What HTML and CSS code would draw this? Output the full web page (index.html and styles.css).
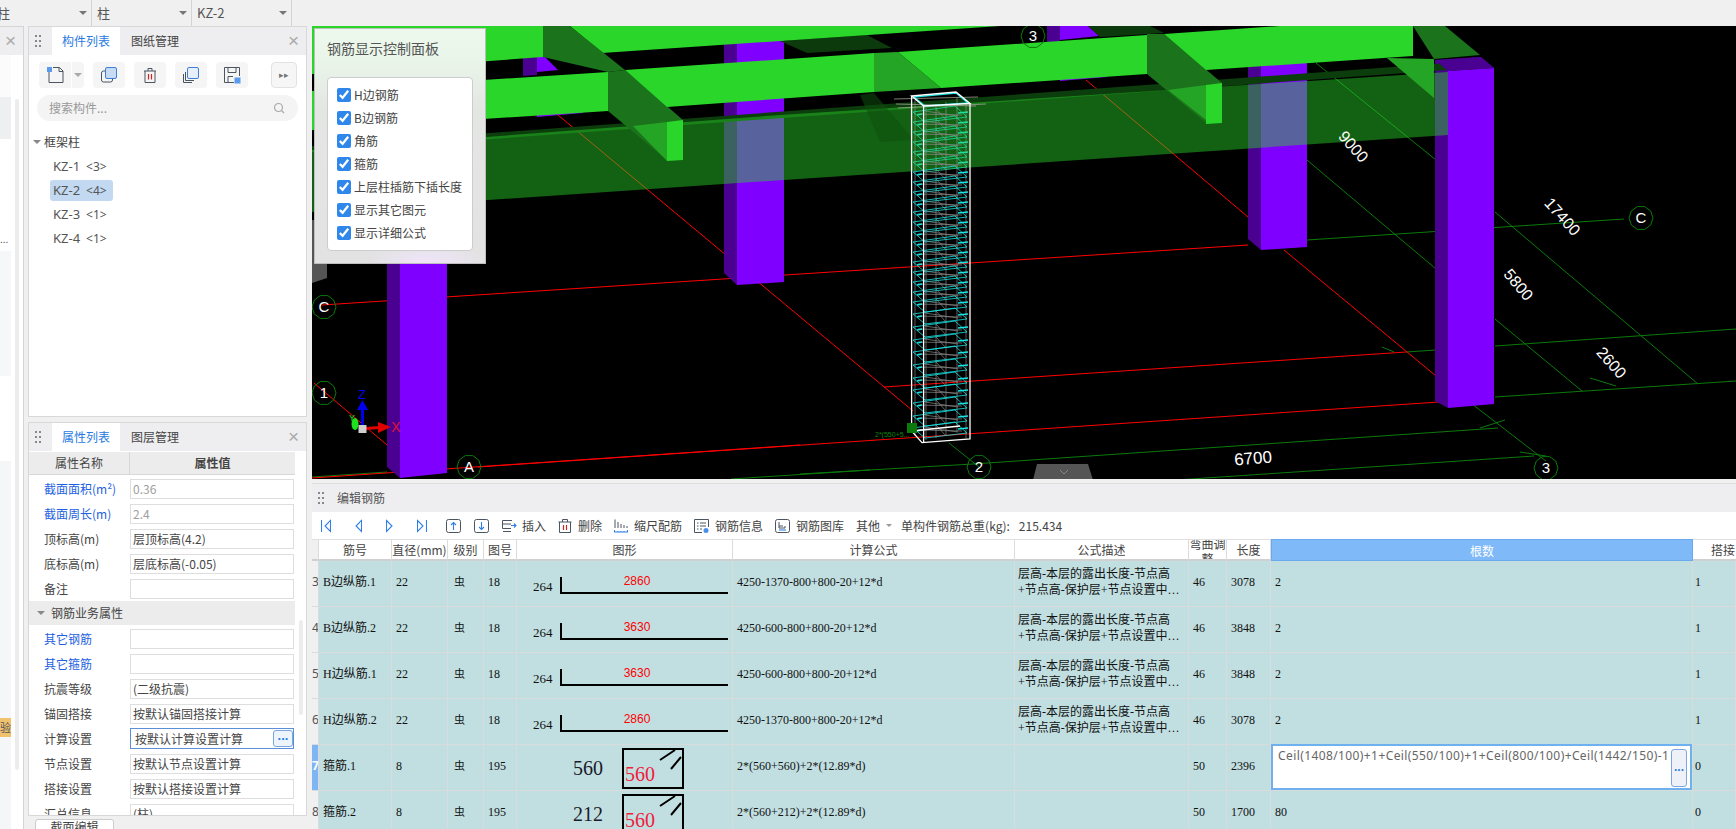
FILE: index.html
```html
<!DOCTYPE html>
<html lang="zh">
<head>
<meta charset="utf-8">
<title>编辑钢筋</title>
<link rel="stylesheet" href="styles.css">
</head>
<body>
<svg class="sprite" width="0" height="0" aria-hidden="true">
  <defs>
    <g id="dots"><rect x="0" y="0" width="2" height="2"/><rect x="4" y="0" width="2" height="2"/><rect x="0" y="5" width="2" height="2"/><rect x="4" y="5" width="2" height="2"/><rect x="0" y="10" width="2" height="2"/><rect x="4" y="10" width="2" height="2"/></g>
    <polygon id="oct" points="12,0 9.7,7 3.7,11.4 -3.7,11.4 -9.7,7 -12,0 -9.7,-7 -3.7,-11.4 3.7,-11.4 9.7,-7"/>
    <g id="st">
      <polygon class="st-q" points="913,0 955,-6 967,5 925,10"/>
      <path class="st-g" d="M918 2L962 3M936 -3L946 8M925 -1L958 4"/>
      <path class="st-t" d="M958 1L968 0M917 3L922 2"/>
    </g>
  </defs>
</svg>
<div class="app">
  <header class="topbar">
    <div class="drop drop-first"><span>柱</span><i class="caret"></i></div>
    <div class="drop"><span>柱</span><i class="caret"></i></div>
    <div class="drop"><span>KZ-2</span><i class="caret"></i></div>
  </header>
  <div class="main">
    <aside class="strip">
      <div class="strip-head"><span class="close">×</span></div>
      <div class="strip-body">
        <div class="strip-list">
          <div class="sl sl-a"></div>
          <div class="sl sl-b"></div>
          <div class="sl sl-c">...</div>
          <div class="sl sl-d"></div>
          <div class="sl sl-e"></div>
          <div class="sl sl-f"><div class="badge">验</div></div>
        </div>
        <div class="strip-scroll"></div>
      </div>
    </aside>

    <div class="sidecol">
      <section class="panel panel-list">
        <div class="p-head">
          <svg class="dots" width="6" height="12"><use href="#dots"/></svg>
          <span class="tab active">构件列表</span><span class="tab">图纸管理</span>
          <span class="close">×</span>
        </div>
        <div class="p-tools">
          <button class="ibtn ibtn-main"><svg width="18" height="18" viewBox="0 0 18 18"><path class="ic-k" d="M3 5V16.5H17V5L13.500 1.500H7"/><path class="ic-k" d="M13 1.500V5.500H17"/><rect class="ic-blue" x="1" y="1" width="5" height="5"/></svg></button>
          <button class="ibtn ibtn-caret"><i class="caret"></i></button>
          <button class="ibtn"><svg width="18" height="18" viewBox="0 0 18 18"><rect class="ic-k" x="1.500" y="5" width="11" height="11" rx="2"/><rect class="ic-f" x="5.500" y="1.500" width="11" height="11" rx="1.500"/></svg></button>
          <button class="ibtn"><svg width="18" height="18" viewBox="0 0 18 18"><path class="ic-k" d="M3 5H15M7 5V2.500H11V5M4 5V16.500H14V5"/><path class="ic-r" d="M7.500 8V13.500M10.500 8V13.500"/></svg></button>
          <button class="ibtn"><svg width="18" height="18" viewBox="0 0 18 18"><path class="ic-k" d="M1.500 8V16.500H10M3.500 6V14.500H12"/><rect class="ic-l" x="5.500" y="1.500" width="11" height="11" rx="1.500"/></svg></button>
          <button class="ibtn"><svg width="18" height="18" viewBox="0 0 18 18"><path class="ic-k" d="M11 16.500H1.500V1.500H16.500V10M5 1.500V6.500H13V1.500M5 16.500V10.500H10"/><rect class="ic-blue" x="11.500" y="11.500" width="6" height="6"/></svg></button>
          <button class="ibtn ibtn-more"><span>▸▸</span></button>
        </div>
        <div class="search"><span>搜索构件...</span><svg width="12" height="12" viewBox="0 0 12 12"><circle class="ic-gr" cx="5.500" cy="5.500" r="4"/><path class="ic-gr" d="M8.500 8.500L11 11"/></svg></div>
        <ul class="tree">
          <li class="t-root"><i class="caret"></i>框架柱</li>
          <li class="t-item"><span class="t-lab">KZ-1<small>&lt;3&gt;</small></span></li>
          <li class="t-item"><span class="t-lab sel">KZ-2<small>&lt;4&gt;</small></span></li>
          <li class="t-item"><span class="t-lab">KZ-3<small>&lt;1&gt;</small></span></li>
          <li class="t-item"><span class="t-lab">KZ-4<small>&lt;1&gt;</small></span></li>
        </ul>
      </section>

      <section class="panel panel-props">
        <div class="p-head">
          <svg class="dots" width="6" height="12"><use href="#dots"/></svg>
          <span class="tab active">属性列表</span><span class="tab">图层管理</span>
          <span class="close">×</span>
        </div>
        <div class="props-scroll"></div>
        <div class="prop-head"><div class="ph-n">属性名称</div><div class="ph-v">属性值</div></div>
        <div class="props">
          <div class="prow"><label class="blue">截面面积(m²)</label><div class="val dis">0.36</div></div>
          <div class="prow"><label class="blue">截面周长(m)</label><div class="val dis">2.4</div></div>
          <div class="prow"><label>顶标高(m)</label><div class="val">层顶标高(4.2)</div></div>
          <div class="prow"><label>底标高(m)</label><div class="val">层底标高(-0.05)</div></div>
          <div class="prow"><label>备注</label><div class="val"></div></div>
          <div class="psec"><i class="caret"></i>钢筋业务属性</div>
          <div class="prow"><label class="blue">其它钢筋</label><div class="val"></div></div>
          <div class="prow"><label class="blue">其它箍筋</label><div class="val"></div></div>
          <div class="prow"><label>抗震等级</label><div class="val">(二级抗震)</div></div>
          <div class="prow"><label>锚固搭接</label><div class="val">按默认锚固搭接计算</div></div>
          <div class="prow"><label>计算设置</label><div class="val active">按默认计算设置计算<span class="dotbtn">...</span></div></div>
          <div class="prow"><label>节点设置</label><div class="val">按默认节点设置计算</div></div>
          <div class="prow"><label>搭接设置</label><div class="val">按默认搭接设置计算</div></div>
          <div class="prow"><label>汇总信息</label><div class="val">(柱)</div></div>
        </div>
      </section>
      <button class="sect-btn">截面编辑</button>
    </div>

    <div class="work">
      <div class="viewport">
        <svg class="scene" width="1424" height="453" viewBox="312 26 1424 453">
          <rect x="312" y="26" width="1424" height="453" fill="#000"/>
          <g class="ln-g">
            <path d="M312 477L387 472M731 479L870 470M800 474L973 464M973 464L1498 428M1176 480L1534 456"/>
            <path d="M1307 240L1624 219M1495 346L1736 329M1406 352L1436 350M1495 397L1736 381"/>
            <path d="M1316 63L1436 160L1436 269M1307 160L1436 269M1495 319L1582 391M1495 212L1698 384M1472 404L1546 461M949 443L979 467"/>
            <path d="M1480 428L1505 420M1590 378L1616 386M1546 456L1520 452M1382 347L1394 352"/>
          </g>
          <g class="ln-r">
            <path d="M322 305L1248 245M884 387L1406 352M478 467L1439 402M800 445L312 478"/>
            <path d="M558 115L913 411M1086 80L1248 217M1284 250L1436 376M314 383L387 445"/>
          </g>
          <g class="col-s"><polygon points="387,150 400,150 400,478 387,467"/><polygon points="724,42 737,42 737,285 724,273"/><polygon points="1248,60 1261,60 1261,250 1248,239"/><polygon points="1435,60 1481,57 1494,68 1448,71 1448,408 1435,401"/><polygon points="1047,26 1060,26 1060,60 1047,60"/><polygon points="523,58 537,57 537,75 523,76"/></g>
          <g class="col-f"><polygon points="400,150 447,150 447,473 400,478"/><polygon points="737,42 784,40 784,282 737,285"/><polygon points="1261,60 1307,60 1307,247 1261,250"/><polygon points="1448,71 1494,68 1494,404 1448,408"/><polygon points="1060,26 1088,26 1099,36 1060,40"/><polygon points="1060,78 1107,75 1107,77 1060,81"/><polygon points="537,57 545,57 558,70 537,72"/><polygon points="536,113 583,110 583,113 537,117"/></g>
          <polygon class="shade" points="312,152 1448,70 1448,63 312,146"/>
          <polygon class="band" points="312,150 780,115 1448,72 1448,135 312,212"/>
          <polygon class="dk" points="780,41 867,35 892,48 807,53"/>
          <polygon class="dk" points="1088,26 1150,26 1164,33 1100,37"/>
          <polygon class="tr" points="860,95 874,93 914,140 880,142"/>
          <polygon class="br" points="312,26 543,26 543,57 312,74"/>
          <polygon class="br" points="570,26 1000,26 602,53"/>
          <polygon class="sd" points="543,26 570,26 625,70 608,72 543,57"/>
          <polygon class="sd" points="608,72 625,70 683,120 683,160 667,160 608,111"/>
          <polygon class="md" points="633,126 667,122 667,161"/>
          <polygon class="br" points="667,122 683,120 683,160 667,161"/>
          <polygon class="br" points="312,91 608,72 608,111 312,130"/>
          <polygon class="br" points="625,70 874,53 874,92 667,107"/>
          <polygon class="md" points="874,53 898,52 941,88 874,92"/>
          <polygon class="br" points="898,52 1147,35 1147,74 941,88"/>
          <polygon class="sd" points="1147,34 1164,34 1222,83 1222,123 1206,123 1147,74"/>
          <polygon class="md" points="1168,90 1206,85 1206,120"/>
          <polygon class="br" points="1206,85 1222,83 1222,123 1206,124"/>
          <polygon class="br" points="1164,34 1280,26 1413,26 1413,56 1206,70"/>
          <polygon class="sd" points="1413,26 1445,26 1480,55 1434,59"/>
          <polygon class="md" points="1387,58 1434,59 1434,98"/>
          <polygon class="col-s-top" points="1435,60 1481,57 1494,68 1448,71"/>
          <polygon class="tab-grey" points="312,220 314,220 314,264 327,264 327,278 312,283"/>

          <g class="cage-in">
            <path d="M915 100V436M926 108V440M966 104V438M957 98V432M936 104V438M946 102V436"/>
          </g>
          <g class="st-up"><use href="#st" y="112"/><use href="#st" y="122"/><use href="#st" y="132"/><use href="#st" y="142"/><use href="#st" y="152"/><use href="#st" y="162"/></g>
          <g class="st-lo"><use href="#st" y="172"/><use href="#st" y="182"/><use href="#st" y="192"/><use href="#st" y="202"/><use href="#st" y="212"/><use href="#st" y="222"/><use href="#st" y="232"/><use href="#st" y="242"/><use href="#st" y="252"/><use href="#st" y="262"/><use href="#st" y="272"/><use href="#st" y="282"/><use href="#st" y="292"/><use href="#st" y="302"/><use href="#st" y="314"/><use href="#st" y="327"/><use href="#st" y="340"/><use href="#st" y="352"/><use href="#st" y="365"/><use href="#st" y="378"/><use href="#st" y="390"/><use href="#st" y="403"/><use href="#st" y="416"/><use href="#st" y="428"/></g>
          <path class="cage-hk" d="M894 99L978 97M896 104L976 106M898 108L986 104"/>
          <polygon class="cage-c" points="914,97 956,93 968,103 925,106"/>
          <g class="cage">
            <polygon points="911.600,96 956,92 970,103.500 923.600,106"/>
            <path d="M911.600 96V431L922 442.600L970 439V103.500M923.600 106V442.600M911.600 431L960 426"/>
          </g>
          <text class="t-grn" x="875" y="437">2*(550+5...</text>
          <rect class="blob" x="907" y="423" width="10" height="10"/>

          <g class="grids">
            <use href="#oct" x="1033" y="36"/><use href="#oct" x="324" y="307"/><use href="#oct" x="324" y="393"/><use href="#oct" x="469" y="467"/><use href="#oct" x="979" y="467"/><use href="#oct" x="1546" y="468"/><use href="#oct" x="1641" y="218"/>
          </g>
          <g class="t-w">
            <text x="1033" y="41">3</text><text x="324" y="312">C</text><text x="324" y="398">1</text><text x="469" y="472">A</text><text x="979" y="472">2</text><text x="1546" y="473">3</text><text x="1641" y="223">C</text>
            <text class="dim" transform="translate(1353 147) rotate(48)" y="5">9000</text>
            <text class="dim" transform="translate(1562 217) rotate(48)" y="5">17400</text>
            <text class="dim" transform="translate(1518 285) rotate(50)" y="5">5800</text>
            <text class="dim" transform="translate(1611 363) rotate(48)" y="5">2600</text>
            <text class="dim-l" transform="translate(1253 458) rotate(-5)" y="6">6700</text>
          </g>
          <polygon class="tab-grey" points="1037,464 1088,464 1093,480 1033,480"/>
          <path class="chev" d="M1060 470L1064 474L1068 470"/>

          <path class="gz-b" d="M362.500 428V410"/><polygon class="gz-bf" points="357,410 362.500,400 368,410"/>
          <text class="gz-z" x="362" y="399">Z</text>
          <path class="gz-r" d="M365 428.500L380 427.500"/><polygon class="gz-rf" points="378,422 391,427 378,433"/>
          <text class="gz-x" x="396" y="432">X</text>
          <ellipse class="gz-g" cx="355" cy="424" rx="3.500" ry="6"/>
          <text class="gz-y" x="349" y="421">Y</text>
          <rect class="gz-c" x="358.500" y="425" width="8" height="8"/>
        </svg>

        <div class="ctl">
          <h4>钢筋显示控制面板</h4>
          <div class="ctl-card">
            <label><input type="checkbox" checked>H边钢筋</label>
            <label><input type="checkbox" checked>B边钢筋</label>
            <label><input type="checkbox" checked>角筋</label>
            <label><input type="checkbox" checked>箍筋</label>
            <label><input type="checkbox" checked>上层柱插筋下插长度</label>
            <label><input type="checkbox" checked>显示其它图元</label>
            <label><input type="checkbox" checked>显示详细公式</label>
          </div>
        </div>
      </div>

      <section class="editor">
        <div class="e-head">
          <svg class="dots" width="6" height="12"><use href="#dots"/></svg>
          <span>编辑钢筋</span>
        </div>
        <div class="e-tools">
          <svg class="nav first" width="10" height="14" viewBox="0 0 10 14"><path class="ic-b" d="M.500 1V13M9.500 1.500L4 7L9.500 12.500Z"/></svg>
          <svg class="nav" width="7" height="14" viewBox="0 0 7 14"><path class="ic-b" d="M6.500 1.500L1 7L6.500 12.500Z"/></svg>
          <svg class="nav" width="7" height="14" viewBox="0 0 7 14"><path class="ic-b" d="M.500 1.500L6 7L.500 12.500Z"/></svg>
          <svg class="nav" width="10" height="14" viewBox="0 0 10 14"><path class="ic-b" d="M.500 1.500L6 7L.500 12.500ZM9.500 1V13"/></svg>
          <svg class="box first-box" width="15" height="14" viewBox="0 0 15 14"><rect class="ic-k" x=".5" y=".5" width="14" height="13" rx="2"/><path class="ic-b" d="M7.500 11V3.500M5 6L7.500 3.500L10 6"/></svg>
          <svg class="box" width="15" height="14" viewBox="0 0 15 14"><rect class="ic-k" x=".5" y=".5" width="14" height="13" rx="2"/><path class="ic-b" d="M7.500 3V10.500M5 8L7.500 10.500L10 8"/></svg>
          <div class="tool tool-ins"><svg width="15" height="12" viewBox="0 0 15 12"><path class="ic-k" d="M9 4H.5V.5H10M.5 4V8.500H9M1 11.500H9"/><path class="ic-b" d="M9 5.500H14M12 3.500L14 5.500L12 7.500"/></svg><span>插入</span></div>
          <div class="tool"><svg width="14" height="14" viewBox="0 0 14 14"><path class="ic-k" d="M.5 3H13.500M4.500 3V.5H9.500V3M1.500 3V13.500H12.500V3"/><path class="ic-r" d="M5.500 6V11M8.500 6V11"/></svg><span>删除</span></div>
          <div class="tool tool-wide"><svg width="14" height="14" viewBox="0 0 14 14"><path class="ic-k" d="M1 .5V9M4 3V9M7 5V9M10 6V9M13 7V9"/><path class="ic-b" d="M.5 11V13H13.500V11M4 13V12M7 13V12M10 13V12"/></svg><span>缩尺配筋</span></div>
          <div class="tool"><svg width="15" height="14" viewBox="0 0 15 14"><path class="ic-k" d="M8 13.500H.5V.5H14.500V8M3 4H4.500M6 4H12M3 7H4.500M6 7H12M3 10H4.500M6 10H8"/><circle class="ic-bf" cx="12" cy="11.500" r="2.500"/></svg><span>钢筋信息</span></div>
          <div class="tool"><svg width="15" height="14" viewBox="0 0 15 14"><rect class="ic-k" x=".5" y=".5" width="14" height="13" rx="2"/><path class="ic-k" d="M4 3V7H8M4 7V9H10V7"/><path class="ic-b" d="M4 11H11"/></svg><span>钢筋图库</span></div>
          <div class="tool tool-other"><span>其他</span><i class="caret"></i></div>
          <div class="tool tool-total"><span>单构件钢筋总重(kg):</span><span class="tot">215.434</span></div>
        </div>
        <table class="grid">
          <colgroup><col class="c0"><col class="c1"><col class="c2"><col class="c3"><col class="c4"><col class="c5"><col class="c6"><col class="c7"><col class="c8"><col class="c9"><col class="c10"><col class="c11"></colgroup>
          <thead>
            <tr><th></th><th>筋号</th><th>直径(mm)</th><th>级别</th><th>图号</th><th>图形</th><th>计算公式</th><th>公式描述</th><th class="wrap"><div>弯曲调整</div></th><th>长度</th><th class="hl">根数</th><th class="left">搭接</th></tr>
          </thead>
          <tbody>
            <tr>
              <td class="n">3</td><td>B边纵筋.1</td><td>22</td><td class="gr">虫</td><td>18</td>
              <td class="pic"><svg class="shape" width="216" height="45" viewBox="0 0 216 45"><text class="s-k" x="16" y="30">264</text><path class="s-l" d="M44 16V32H211"/><text class="s-r" x="120" y="24">2860</text></svg></td>
              <td>4250-1370-800+800-20+12*d</td>
              <td class="desc">层高-本层的露出长度-节点高<br>+节点高-保护层+节点设置中…</td>
              <td>46</td><td>3078</td><td>2</td><td class="last">1</td>
            </tr>
            <tr>
              <td class="n">4</td><td>B边纵筋.2</td><td>22</td><td class="gr">虫</td><td>18</td>
              <td class="pic"><svg class="shape" width="216" height="45" viewBox="0 0 216 45"><text class="s-k" x="16" y="30">264</text><path class="s-l" d="M44 16V32H211"/><text class="s-r" x="120" y="24">3630</text></svg></td>
              <td>4250-600-800+800-20+12*d</td>
              <td class="desc">层高-本层的露出长度-节点高<br>+节点高-保护层+节点设置中…</td>
              <td>46</td><td>3848</td><td>2</td><td class="last">1</td>
            </tr>
            <tr>
              <td class="n">5</td><td>H边纵筋.1</td><td>22</td><td class="gr">虫</td><td>18</td>
              <td class="pic"><svg class="shape" width="216" height="45" viewBox="0 0 216 45"><text class="s-k" x="16" y="30">264</text><path class="s-l" d="M44 16V32H211"/><text class="s-r" x="120" y="24">3630</text></svg></td>
              <td>4250-600-800+800-20+12*d</td>
              <td class="desc">层高-本层的露出长度-节点高<br>+节点高-保护层+节点设置中…</td>
              <td>46</td><td>3848</td><td>2</td><td class="last">1</td>
            </tr>
            <tr>
              <td class="n">6</td><td>H边纵筋.2</td><td>22</td><td class="gr">虫</td><td>18</td>
              <td class="pic"><svg class="shape" width="216" height="45" viewBox="0 0 216 45"><text class="s-k" x="16" y="30">264</text><path class="s-l" d="M44 16V32H211"/><text class="s-r" x="120" y="24">2860</text></svg></td>
              <td>4250-1370-800+800-20+12*d</td>
              <td class="desc">层高-本层的露出长度-节点高<br>+节点高-保护层+节点设置中…</td>
              <td>46</td><td>3078</td><td>2</td><td class="last">1</td>
            </tr>
            <tr>
              <td class="n cur">7</td><td>箍筋.1</td><td>8</td><td class="gr">虫</td><td>195</td>
              <td class="pic"><svg class="shape" width="216" height="45" viewBox="0 0 216 45"><text class="s-big" x="56" y="30">560</text><rect class="s-b" x="106" y="4" width="60" height="39"/><path class="s-h" d="M143 15L158 5M154 24L164 12"/><text class="s-bigr" x="108" y="36">560</text></svg></td>
              <td>2*(560+560)+2*(12.89*d)</td>
              <td></td>
              <td>50</td><td>2396</td>
              <td class="edit"><div class="edit-box"><span class="edit-t">Ceil(1408/100)+1+Ceil(550/100)+1+Ceil(800/100)+Ceil(1442/150)-1</span><span class="edit-btn">...</span></div></td>
              <td class="last">0</td>
            </tr>
            <tr>
              <td class="n">8</td><td>箍筋.2</td><td>8</td><td class="gr">虫</td><td>195</td>
              <td class="pic"><svg class="shape" width="216" height="45" viewBox="0 0 216 45"><text class="s-big" x="56" y="30">212</text><rect class="s-b" x="106" y="4" width="60" height="39"/><path class="s-h" d="M143 15L158 5M154 24L164 12"/><text class="s-bigr" x="108" y="36">560</text></svg></td>
              <td>2*(560+212)+2*(12.89*d)</td>
              <td></td>
              <td>50</td><td>1700</td><td>80</td><td class="last">0</td>
            </tr>
          </tbody>
        </table>
      </section>
    </div>
  </div>
</div>
</body>
</html>
```
FILE: styles.css
```css
* { box-sizing: border-box; }
html, body { margin: 0; padding: 0; height: 100%; overflow: hidden; }
body { font: 12px/1.3 "Noto Sans CJK SC", "Noto Sans", sans-serif; color: #444; background: #f0f0f0; }
.sprite { position: absolute; }
.app { width: 1736px; height: 829px; display: flex; flex-direction: column; overflow: hidden; background: #f0f0f0; }
.caret { display: inline-block; width: 0; height: 0; border: 4px solid transparent; border-top: 4px solid #777; border-bottom: 0; }

/* top bar */
.topbar { height: 26px; flex: none; display: flex; background: #f0f0f0; }
.drop { width: 100px; height: 26px; display: flex; align-items: center; justify-content: space-between; padding: 0 4px 0 5px; border-right: 1px solid #d4d4d4; font-size: 13px; color: #555; }
.drop-first { margin-left: -8px; }

.main { flex: 1; display: flex; min-height: 0; }

/* far-left strip */
.strip { width: 24px; flex: none; background: #fff; border-right: 1px solid #d4d4d4; display: flex; flex-direction: column; border-top: 1px solid #d4d4d4; }
.strip-head { height: 28px; flex: none; background: #eeeef0; display: flex; justify-content: flex-end; }
.strip-head .close { margin: 0 7px 0 0; }
.strip-body { flex: 1; display: flex; }
.strip-list { width: 11px; flex: none; display: flex; flex-direction: column; }
.sl { flex: none; }
.sl-a { height: 42px; background: #fbfbfc; }
.sl-b { height: 42px; background: #eeeff1; }
.sl-c { height: 112px; line-height: 200px; color: #555; overflow: hidden; font-size: 10px; }
.sl-d { height: 125px; background: #f6f7f9; }
.sl-e { height: 85px; }
.sl-f { height: 368px; background: #f5f6f8; padding-top: 257px; }
.badge { height: 19px; background: #f0c26e; color: #555; font-size: 11px; line-height: 19px; overflow: hidden; }
.strip-scroll { width: 4px; height: 671px; margin: 44px 0 0 4px; background: #ececec; border-radius: 2px; }
.close { font-size: 19px; line-height: 28px; color: #aaa; font-family: "Liberation Sans", sans-serif; }

/* side column */
.sidecol { width: 279px; flex: none; margin: 0 5px 0 4px; display: flex; flex-direction: column; }
.panel { background: #fff; border: 1px solid #d8d8d8; display: flex; flex-direction: column; position: relative; flex: none; }
.panel-list { height: 391px; }
.panel-props { height: 394px; margin-top: 5px; overflow: hidden; }
.p-head { height: 28px; flex: none; background: #eeeef0; display: flex; align-items: center; }
.dots { fill: #888; flex: none; margin-left: 6px; }
.tab { width: 68px; height: 28px; line-height: 28px; text-align: center; color: #444; }
.p-head .tab.active { background: #fff; color: #2a7ae2; margin-left: 11px; }
.p-head .close { margin-left: auto; margin-right: 7px; }
.p-head .tab + .tab { width: 70px; }

.p-tools { display: flex; padding: 7px 0 0 10px; height: 33px; flex: none; }
.ibtn { width: 32px; height: 26px; padding: 0; border: 0; border-radius: 4px; background: #f5f5f5; display: flex; align-items: center; justify-content: center; margin-right: 9px; }
.ibtn-main { border-radius: 4px 0 0 4px; margin-right: 1px; }
.ibtn-caret { width: 12px; border-radius: 0 4px 4px 0; }
.ibtn-caret .caret { border-top-color: #aaa; }
.ibtn-more { width: 26px; margin: 0 0 0 14px; background: #f6f6f6; border: 1px solid #e2e2e2; color: #777; font-size: 9px; letter-spacing: 0; }
.ic-k { fill: none; stroke: #4a5560; stroke-width: 1; }
.ic-b { fill: none; stroke: #2f7fe6; stroke-width: 1.1; }
.ic-bf { fill: #4a90ea; }
.ic-r { fill: none; stroke: #d92020; stroke-width: 1.2; }
.ic-blue { fill: #5b9bee; }
.ic-f { fill: #c7dbf5; stroke: #3f7fd6; stroke-width: 1; }
.ic-l { fill: #e6effb; stroke: #3f7fd6; stroke-width: 1; }
.ic-gr { fill: none; stroke: #aaa; stroke-width: 1.2; }

.search { margin: 7px 8px 0 8px; height: 26px; border-radius: 13px; background: #f4f4f4; display: flex; align-items: center; justify-content: space-between; padding: 0 13px 0 12px; color: #999; flex: none; font-size: 12px; }
.tree { list-style: none; margin: 9px 0 0; padding: 0; }
.t-root { height: 24px; display: flex; align-items: center; padding-left: 4px; color: #444; }
.t-root .caret { margin-right: 3px; border-top-color: #888; }
.t-item { height: 24px; display: flex; align-items: center; padding-left: 21px; }
.t-lab { height: 21px; line-height: 21px; padding: 0 3px; border-radius: 3px; font-size: 13px; color: #555; font-family: "Noto Sans", sans-serif; width: 63px; white-space: nowrap; }
.t-lab small { font-size: 12px; margin-left: 6px; }
.t-lab.sel { background: #c2d9f1; }

/* properties */
.prop-head { display: flex; height: 23px; margin-top: 1px; width: 266px; flex: none; background: #ececec; border-bottom: 1px solid #d8d8d8; text-align: center; line-height: 22px; }
.ph-n { width: 101px; border-right: 1px solid #d8d8d8; }
.ph-v { flex: 1; font-weight: 700; color: #444; }
.props { width: 266px; padding-top: 1px; }
.prow { height: 25px; display: flex; align-items: center; }
.prow label { width: 101px; padding-left: 15px; flex: none; white-space: nowrap; }
.blue { color: #1d5fe0; }
.val { width: 164px; height: 20px; border: 1px solid #dedede; padding-left: 2px; line-height: 17px; white-space: nowrap; overflow: hidden; }
.val.dis { color: #a0a0a0; }
.val.active { height: 21px; border-color: #5b8fd8; padding-left: 4px; display: flex; justify-content: space-between; align-items: center; padding-right: 0; }
.dotbtn { width: 20px; height: 17px; border: 1px solid #7aa7e0; border-radius: 3px; color: #2f7fe6; font: 700 13px/9px "Liberation Sans", sans-serif; text-align: center; background: #eef4fc; flex: none; }
.psec { height: 24px; margin-bottom: 1px; background: #ececec; display: flex; align-items: center; padding-left: 8px; }
.psec .caret { margin-right: 6px; border-top-color: #888; }
.props-scroll { position: absolute; left: 270px; top: 197px; width: 4px; height: 95px; background: #ececec; border-radius: 2px; }
.sect-btn { width: 79px; height: 16px; margin: 3px 0 0 7px; padding: 0; background: #fff; border: 1px solid #ccc; border-radius: 3px; font: 12px/1.1 "Noto Sans CJK SC", sans-serif; color: #444; flex: none; }

/* work area */
.work { flex: 1; min-width: 0; display: flex; flex-direction: column; }
.viewport { height: 453px; flex: none; position: relative; overflow: hidden; background: #000; }
.scene { display: block; }
.ln-g path { fill: none; stroke: #0b7a0b; stroke-width: 1; }
.ln-r path { fill: none; stroke: #f00; stroke-width: 1; }
.col-s polygon { fill: #4a0090; }
.col-f polygon { fill: #8000ff; }
.col-s-top { fill: #4a0090; }
.shade { fill: #0c3d0c; }
.band { fill: #2ad62a; opacity: .46; }
.dk { fill: #0c3a0c; }
.tr { fill: #0f4f0f; opacity: .55; }
.br { fill: #2ad62a; }
.sd { fill: #1b731b; }
.md { fill: #25a525; }
.tab-grey { fill: #555; }
.chev { fill: none; stroke: #888; stroke-width: 1; }
.cage-in path { fill: none; stroke: #9a9a9a; stroke-width: .6; }
.st-up { stroke: #22dc9c; }
.st-lo { stroke: #19e3e3; }
.st-q { fill: none; stroke-width: .8; }
.st-g { fill: none; stroke: #8a8a8a; stroke-width: .7; }
.st-t { fill: none; stroke-width: 1.3; }
.cage-hk { fill: none; stroke: #a0a090; stroke-width: .8; }
.cage-c { fill: none; stroke: #19e3e3; stroke-width: 1.4; }
.cage polygon, .cage path { fill: none; stroke: #fff; stroke-width: 1.3; }
.t-grn { fill: #0b8a0b; font: 7px "Liberation Sans", sans-serif; }
.blob { fill: #0a7a0a; }
.grids use { fill: none; stroke: #0b7a0b; stroke-width: 1; }
.t-w text { fill: #fff; font: 15px "Liberation Sans", sans-serif; text-anchor: middle; }
.t-w text.dim { font-size: 16px; }
.t-w text.dim-l { font-size: 17px; }
.gz-b { stroke: #0000f0; stroke-width: 3; }
.gz-bf { fill: #0000f0; }
.gz-z { fill: #0000f0; font: 13px "Liberation Sans", sans-serif; text-anchor: middle; }
.gz-r { stroke: #e00000; stroke-width: 3; }
.gz-rf { fill: #e00000; }
.gz-x { fill: #e0103c; font: 14px "Liberation Sans", sans-serif; text-anchor: middle; }
.gz-g { fill: #1fe01f; }
.gz-y { fill: #1fe01f; font: 9px "Liberation Sans", sans-serif; }
.gz-c { fill: #cfcfcf; }

/* floating control panel */
.ctl { position: absolute; left: 2px; top: 2px; width: 172px; height: 236px; padding: 9px 12px 0; border: 1px solid #bdbdbd;
  background: radial-gradient(60px 22px at 112px 234px, #f0e4fb 0%, rgba(240,228,251,0) 100%), linear-gradient(180deg, #ecf9ec 0%, #e9f5e9 14%, #e4e6e4 34%, #e2e2e2 100%); }
.ctl h4 { margin: 0; font-size: 14px; font-weight: 400; line-height: 20px; color: #555; }
.ctl-card { margin-top: 19px; width: 146px; height: 174px; padding: 5px 0 0 9px; background: #fff; border: 1px solid #ccc; border-radius: 4px; display: flex; flex-direction: column; }
.ctl-card label { height: 23px; display: flex; align-items: center; color: #444; white-space: nowrap; }
.ctl-card input { width: 14px; height: 14px; margin: 0 3px 0 0; accent-color: #2f86eb; }

/* editor */
.editor { flex: 1; min-height: 0; margin-top: 4px; background: #fff; border-top: 1px solid #ddd; overflow: hidden; }
.e-head { height: 28px; background: #eeeef0; display: flex; align-items: center; color: #555; }
.e-head .dots { margin: 0 13px 0 6px; }
.e-tools { height: 27px; display: flex; align-items: center; padding-left: 9px; white-space: nowrap; color: #444; }
.nav { margin-left: 24px; flex: none; }
.nav.first { margin-left: 0; }
.box { margin-left: 13px; flex: none; }
.box.first-box { margin-left: 19px; }
.tool { display: flex; align-items: center; gap: 6px; margin-left: 12px; flex: none; }
.tool-ins { gap: 5px; margin-left: 13px; }
.tool-other { gap: 6px; }
.tool-other .caret { border-width: 3px; border-top-color: #999; border-bottom: 0; }
.tool-total { margin-left: 9px; gap: 9px; }
.grid { width: 1424px; table-layout: fixed; border-collapse: separate; border-spacing: 0; }
.c0 { width: 7px; } .c1 { width: 73px; } .c2 { width: 56px; } .c3 { width: 36px; } .c4 { width: 33px; } .c5 { width: 216px; } .c6 { width: 282px; } .c7 { width: 174px; } .c8 { width: 38px; } .c9 { width: 44px; } .c10 { width: 422px; } .c11 { width: 43px; }
.grid th { height: 22px; padding: 1px 0 0; font-weight: 400; color: #444; background: #fff; border-top: 1px solid #e0e0e0; border-right: 1px solid #dcdcdc; border-bottom: 2px solid #d0d0d0; text-align: center; white-space: nowrap; overflow: hidden; line-height: 18px; }
.grid th:first-child { background: #f0f0f0; }
.grid th.wrap { white-space: normal; vertical-align: top; padding: 0; }
.grid th.wrap div { height: 19px; margin-top: -4px; line-height: 15px; }
.grid th.hl { background: #80b9f8; color: #fff; border: 1px solid #6aa9ee; }
.grid th.left { text-align: left; padding-left: 18px; border-right: 0; }
.grid td { height: 46px; padding: 13px 0 0 4px; vertical-align: top; background: #c1dfe1; border-right: 1px solid #d8dcdc; border-bottom: 1px solid #d8dcdc; font: 12px/16px "Liberation Serif", "Noto Sans CJK SC", serif; color: #111; white-space: nowrap; overflow: hidden; }
.grid td.n { padding: 13px 0 0 0; background: #f0f0f0; font: 12px/16px "Noto Sans", sans-serif; color: #555; text-align: center; }
.grid td.n.cur { background: #7eb6f5; color: #fff; font-weight: 700; }
.grid td.gr { padding-left: 6px; font-size: 11px; }
.grid td.pic { padding: 0; }
.grid td.desc { padding: 6px 0 0 3px; line-height: 15.5px; }
.grid td.edit { padding: 0; overflow: visible; }
.grid td.last { padding-left: 2px; }
.shape { display: block; }
.s-k { font: 13px "Liberation Serif", serif; fill: #111; }
.s-r { font: 12px "Liberation Sans", sans-serif; fill: #f00; text-anchor: middle; }
.s-l { fill: none; stroke: #000; stroke-width: 2; }
.s-b { fill: none; stroke: #000; stroke-width: 2; }
.s-h { fill: none; stroke: #000; stroke-width: 2; }
.s-big { font: 20px "Liberation Serif", serif; fill: #1a1a2a; }
.s-bigr { font: 20px "Liberation Serif", serif; fill: #f0203c; }
.edit-box { height: 46px; margin-top: -1px; border: 2px solid #6fb0ef; background: #fff; display: flex; align-items: flex-start; justify-content: space-between; padding: 2px 3px 0 5px; }
.edit-t { font: 12px/16px "Noto Sans", sans-serif; color: #666; letter-spacing: .4px; }
.edit-btn { width: 16px; height: 38px; margin-top: 1px; background: #eef1f8; border: 1px solid #7aa7e0; border-radius: 3px; color: #2f7fe6; font: 700 12px/34px "Liberation Sans", sans-serif; text-align: center; }
```
